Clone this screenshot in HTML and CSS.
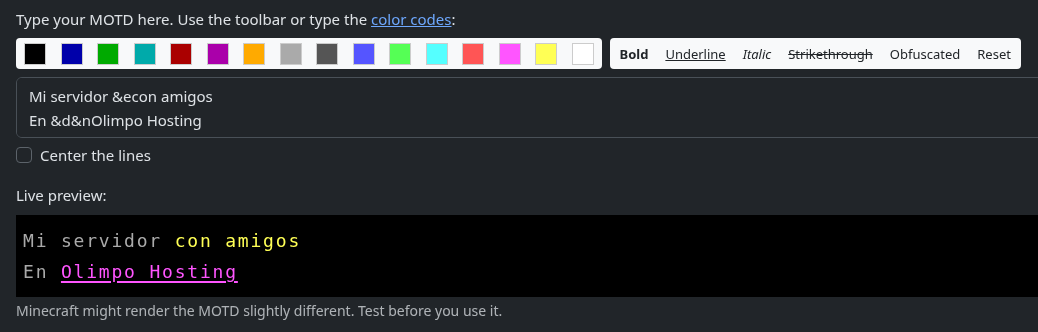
FILE: index.html
```html
<!DOCTYPE html>
<html lang="en">
<head>
  <meta charset="UTF-8">
  <meta name="viewport" content="width=device-width, initial-scale=1.0">
  <title>MOTD Editor</title>
  <link rel="stylesheet" href="styles.css">
</head>
<body>
  <p class="intro">Type your MOTD here. Use the toolbar or type the <a href="#">color codes</a>:</p>

  <div class="toolbar">
    <div class="panel colors">
      <button class="swatch" style="background:#000000" title="&amp;0"></button>
      <button class="swatch" style="background:#0000aa" title="&amp;1"></button>
      <button class="swatch" style="background:#00aa00" title="&amp;2"></button>
      <button class="swatch" style="background:#00aaaa" title="&amp;3"></button>
      <button class="swatch" style="background:#aa0000" title="&amp;4"></button>
      <button class="swatch" style="background:#aa00aa" title="&amp;5"></button>
      <button class="swatch" style="background:#ffaa00" title="&amp;6"></button>
      <button class="swatch" style="background:#aaaaaa" title="&amp;7"></button>
      <button class="swatch" style="background:#555555" title="&amp;8"></button>
      <button class="swatch" style="background:#5555ff" title="&amp;9"></button>
      <button class="swatch" style="background:#55ff55" title="&amp;a"></button>
      <button class="swatch" style="background:#55ffff" title="&amp;b"></button>
      <button class="swatch" style="background:#ff5555" title="&amp;c"></button>
      <button class="swatch" style="background:#ff55ff" title="&amp;d"></button>
      <button class="swatch" style="background:#ffff55" title="&amp;e"></button>
      <button class="swatch" style="background:#ffffff" title="&amp;f"></button>
    </div>
    <div class="panel formats">
      <button class="fmt fmt-bold">Bold</button>
      <button class="fmt fmt-underline">Underline</button>
      <button class="fmt fmt-italic">Italic</button>
      <button class="fmt fmt-strike">Strikethrough</button>
      <button class="fmt">Obfuscated</button>
      <button class="fmt">Reset</button>
    </div>
  </div>

  <textarea class="motd" spellcheck="false">Mi servidor &amp;econ amigos
En &amp;d&amp;nOlimpo Hosting</textarea>

  <label class="check-row">
    <input type="checkbox" class="check">
    <span>Center the lines</span>
  </label>

  <p class="preview-label">Live preview:</p>
  <div class="preview">
    <div><span class="mc-gray">Mi servidor </span><span class="mc-yellow">con amigos</span></div>
    <div><span class="mc-gray">En </span><span class="mc-pink mc-u">Olimpo Hosting</span></div>
  </div>
  <p class="hint">Minecraft might render the MOTD slightly different. Test before you use it.</p>
</body>
</html>
```

FILE: styles.css
```css
html {
  overflow: hidden;
}

body {
  margin: 0;
  padding: 7px 16px 0;
  background-color: #212529;
  color: #dee2e6;
  font-family: 'Noto Sans', 'Open Sans', sans-serif;
  font-size: 15px;
  line-height: 24px;
}

p {
  margin: 0;
}

a {
  color: #6ea8fe;
}

.toolbar {
  display: flex;
  gap: 8px;
  margin-top: 7px;
}

.panel {
  display: flex;
  align-items: center;
  height: 31px;
  background-color: #f8f9fa;
  border-radius: 4px;
}

.colors {
  gap: 14.5px;
  padding: 0 8px;
}

.swatch {
  width: 22px;
  height: 22px;
  padding: 0;
  border: 1px solid #cccccc;
  cursor: pointer;
}

.formats {
  padding: 0 1.5px;
}

.fmt {
  background: none;
  border: none;
  padding: 0 8.5px;
  color: #212529;
  font-family: inherit;
  font-size: 13px;
  cursor: pointer;
}

.fmt-bold {
  font-weight: 700;
}

.fmt-underline {
  text-decoration: underline;
}

.fmt-italic {
  font-style: italic;
}

.fmt-strike {
  text-decoration: line-through;
}

.motd {
  display: block;
  box-sizing: border-box;
  width: 1100px;
  height: 61px;
  margin-top: 8px;
  padding: 6px 12px;
  background-color: #212529;
  color: #dee2e6;
  border: 1px solid #495057;
  border-radius: 6px;
  font-family: inherit;
  font-size: 15px;
  line-height: 24px;
  resize: none;
}

.check-row {
  display: flex;
  align-items: center;
  gap: 8px;
  margin-top: 5px;
}

.check {
  appearance: none;
  width: 16px;
  height: 16px;
  margin: 0;
  border: 1px solid #5c636a;
  border-radius: 4px;
  background-color: #212529;
}

.preview-label {
  margin-top: 16px;
}

.preview {
  width: 1100px;
  margin-top: 8px;
  padding: 10px 7px;
  background-color: #000;
  font-family: 'DejaVu Sans Mono', monospace;
  font-size: 18px;
  letter-spacing: 1.8px;
  line-height: 31px;
}

.mc-gray {
  color: #aaaaaa;
}

.mc-yellow {
  color: #ffff55;
}

.mc-pink {
  color: #ff55ff;
}

.mc-u {
  text-decoration: underline;
  text-decoration-thickness: 2px;
  text-underline-offset: 3px;
}

.hint {
  margin-top: 3px;
  font-size: 14px;
  line-height: 21px;
  color: rgba(222, 226, 230, 0.75);
}
```
